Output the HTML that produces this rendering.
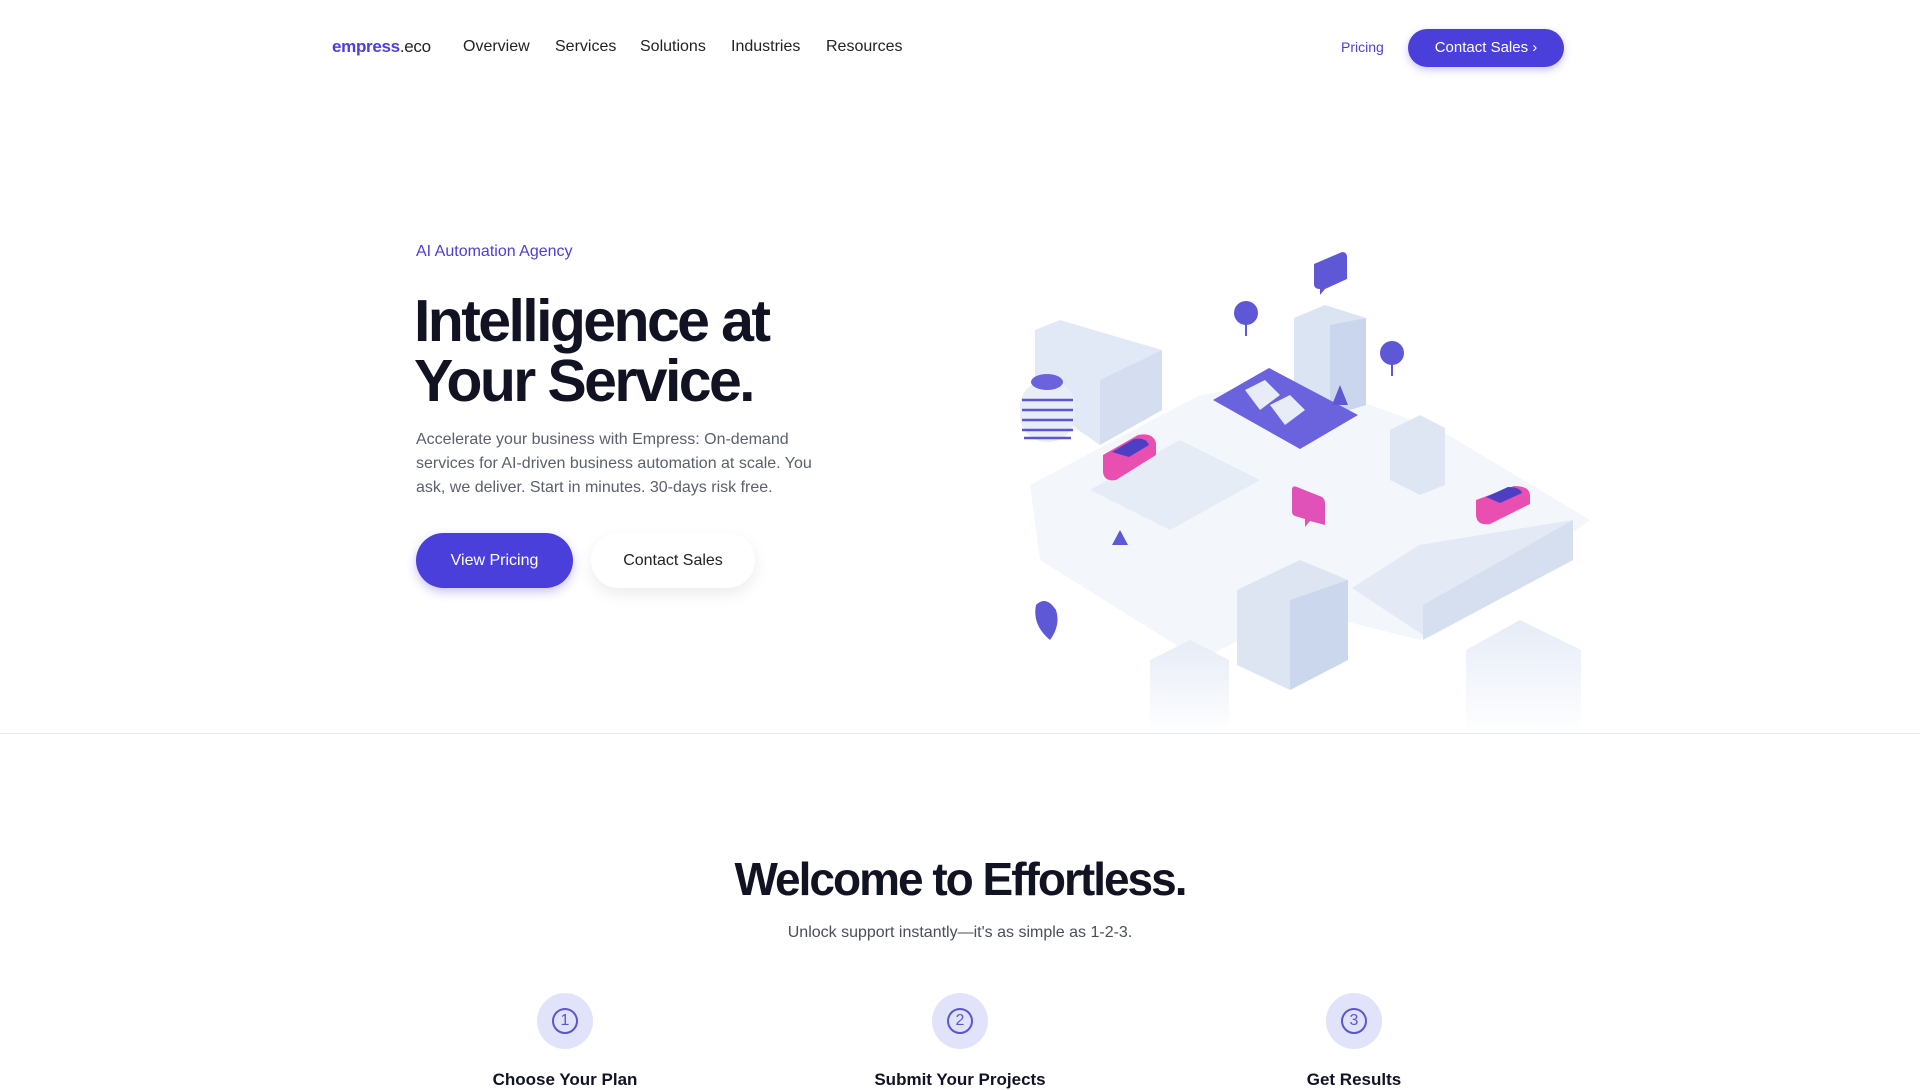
<!DOCTYPE html>
<html><head><meta charset="utf-8"><style>
*{margin:0;padding:0;box-sizing:border-box}
body{width:1920px;height:1080px;overflow:hidden;background:#fff;font-family:"Liberation Sans",sans-serif;color:#111322;position:relative}
.a{position:absolute;white-space:nowrap}
.nav{font-size:16px;color:#222;top:38px}
</style></head><body>
<div class="a" style="left:332px;top:37px;font-size:17px;letter-spacing:-0.3px"><b style="color:#4b3fd6">empress</b><span style="color:#222">.eco</span></div>
<div class="a nav" style="left:463px">Overview</div>
<div class="a nav" style="left:555px">Services</div>
<div class="a nav" style="left:640px">Solutions</div>
<div class="a nav" style="left:731px">Industries</div>
<div class="a nav" style="left:826px">Resources</div>
<div class="a" style="left:1341px;top:39px;font-size:14px;color:#4b3fd6">Pricing</div>
<div class="a" style="left:1408px;top:29px;width:156px;height:38px;border-radius:19px;background:#4b3fdc;color:#fff;font-size:15px;line-height:38px;text-align:center;box-shadow:0 3px 8px rgba(75,63,220,.3)">Contact Sales ›</div>

<div class="a" style="left:416px;top:243px;font-size:16px;color:#4b3fd6">AI Automation Agency</div>
<div class="a" style="left:414px;top:291px;font-size:59px;font-weight:bold;letter-spacing:-2.6px;line-height:60px">Intelligence at<br>Your Service.</div>
<div class="a" style="left:416px;top:428px;font-size:16px;color:#5c606c;line-height:24px">Accelerate your business with Empress: On-demand<br>services for AI-driven business automation at scale. You<br>ask, we deliver. Start in minutes. 30-days risk free.</div>
<div class="a" style="left:416px;top:533px;width:157px;height:55px;border-radius:28px;background:#4b3fdc;color:#fff;font-size:16px;line-height:55px;text-align:center;box-shadow:0 4px 10px rgba(75,63,220,.3)">View Pricing</div>
<div class="a" style="left:591px;top:533px;width:164px;height:55px;border-radius:28px;background:#fff;color:#222;font-size:16px;line-height:55px;text-align:center;box-shadow:0 6px 16px rgba(0,0,0,.08)">Contact Sales</div>

<svg class="a" style="left:0;top:0" width="1920" height="740">
<defs><linearGradient id="g" x1="0" y1="0" x2="0" y2="1"><stop offset="0" stop-color="#e6ecf7"/><stop offset="1" stop-color="#fff"/></linearGradient></defs>
<polygon points="1030,485 1200,395 1300,380 1440,430 1590,520 1420,640 1300,610 1200,660 1040,560" fill="#f3f6fb"/>
<polygon points="1150,660 1190,640 1229,660 1229,735 1150,735" fill="url(#g)"/>
<polygon points="1466,650 1520,620 1581,650 1581,735 1466,735" fill="url(#g)"/>
<polygon points="1352,588 1419,545 1573,520 1573,560 1423,635" fill="#e3eaf5"/>
<polygon points="1423,605 1573,520 1573,560 1423,640" fill="#d5dfef"/>
<polygon points="1090,490 1180,440 1260,480 1170,530" fill="#e6ecf6"/>
<polygon points="1035,330 1060,320 1162,350 1162,410 1100,445 1035,400" fill="#e2e9f6"/>
<polygon points="1100,380 1162,350 1162,410 1100,445" fill="#d4def0"/>
<rect x="1020" y="380" width="55" height="62" rx="27" fill="#e8edf8"/>
<g stroke="#5b55d0" stroke-width="2.5"><line x1="1022" y1="400" x2="1073" y2="400"/><line x1="1022" y1="410" x2="1073" y2="410"/><line x1="1022" y1="420" x2="1073" y2="420"/><line x1="1022" y1="430" x2="1073" y2="430"/><line x1="1024" y1="438" x2="1071" y2="438"/></g>
<ellipse cx="1047" cy="382" rx="16" ry="8" fill="#6b62de"/>
<polygon points="1294,318 1325,305 1366,318 1366,405 1330,416 1294,400" fill="#dbe4f3"/>
<polygon points="1330,325 1366,318 1366,405 1330,416" fill="#c9d6ed"/>
<polygon points="1213,400 1269,368 1358,415 1300,449" fill="#6b62de"/>
<polygon points="1245,390 1265,380 1280,395 1260,410" fill="#e7ecf7"/>
<polygon points="1270,405 1290,395 1305,410 1285,425" fill="#e7ecf7"/>
<polygon points="1237,590 1300,560 1348,580 1348,660 1290,690 1237,665" fill="#dde5f3"/>
<polygon points="1290,600 1348,580 1348,660 1290,690" fill="#cbd7ec"/>
<polygon points="1390,430 1420,415 1445,428 1445,485 1420,495 1390,480" fill="#dfe6f3"/>
<g fill="#5f58d6"><circle cx="1246" cy="313" r="12"/><circle cx="1392" cy="353" r="12"/><rect x="1245" y="320" width="2" height="16"/><rect x="1391" y="360" width="2" height="16"/>
<polygon points="1120,530 1128,545 1112,545"/><polygon points="1340,385 1348,405 1332,405"/>
<path d="M1314,264 l28,-12 q5,0 5,5 v22 l-22,10 l-5,6 v-6 q-6,0 -6,-5z"/>
<path d="M1036,605 q10,-10 20,5 q5,15 -6,30 q-18,-15 -14,-35z"/></g>
<path d="M1292,490 q0,-5 5,-3 l25,10 q3,2 3,6 v22 l-15,-4 l-5,6 v-8 l-10,-3 q-3,-1 -3,-5z" fill="#e052b8"/>
<g><path d="M1103,455 l35,-20 q15,-3 18,8 v12 l-40,25 q-12,2 -13,-8z" fill="#e94fb0"/><path d="M1112,452 l22,-13 q12,-2 15,6 l-20,12z" fill="#4d3fc4"/></g>
<g><path d="M1476,500 l38,-14 q16,0 16,10 v8 l-40,20 q-14,2 -14,-10z" fill="#e94fb0"/><path d="M1486,497 l22,-10 q12,0 14,6 l-22,10z" fill="#4d3fc4"/></g>
</svg>

<div class="a" style="left:0;top:733px;width:1920px;height:1px;background:#e8e9ee"></div>
<div class="a" style="left:0;width:1920px;text-align:center;top:852px;font-size:46px;font-weight:bold;letter-spacing:-2px">Welcome to Effortless.</div>
<div class="a" style="left:0;width:1920px;text-align:center;top:924px;font-size:16px;color:#4a4e5a">Unlock support instantly—it's as simple as 1-2-3.</div>
<div class="a" style="left:537px;top:993px;width:56px;height:56px;border-radius:50%;background:#e1e3fb"></div>
<div class="a" style="left:932px;top:993px;width:56px;height:56px;border-radius:50%;background:#e1e3fb"></div>
<div class="a" style="left:1326px;top:993px;width:56px;height:56px;border-radius:50%;background:#e1e3fb"></div>
<div class="a" style="left:552px;top:1008px;width:26px;height:26px;border:2px solid #5b55d0;border-radius:50%;color:#5b55d0;font-size:16px;line-height:22px;text-align:center">1</div>
<div class="a" style="left:947px;top:1008px;width:26px;height:26px;border:2px solid #5b55d0;border-radius:50%;color:#5b55d0;font-size:16px;line-height:22px;text-align:center">2</div>
<div class="a" style="left:1341px;top:1008px;width:26px;height:26px;border:2px solid #5b55d0;border-radius:50%;color:#5b55d0;font-size:16px;line-height:22px;text-align:center">3</div>
<div class="a" style="left:465px;width:200px;text-align:center;top:1070px;font-size:17px;font-weight:bold">Choose Your Plan</div>
<div class="a" style="left:860px;width:200px;text-align:center;top:1070px;font-size:17px;font-weight:bold">Submit Your Projects</div>
<div class="a" style="left:1254px;width:200px;text-align:center;top:1070px;font-size:17px;font-weight:bold">Get Results</div>
</body></html>
